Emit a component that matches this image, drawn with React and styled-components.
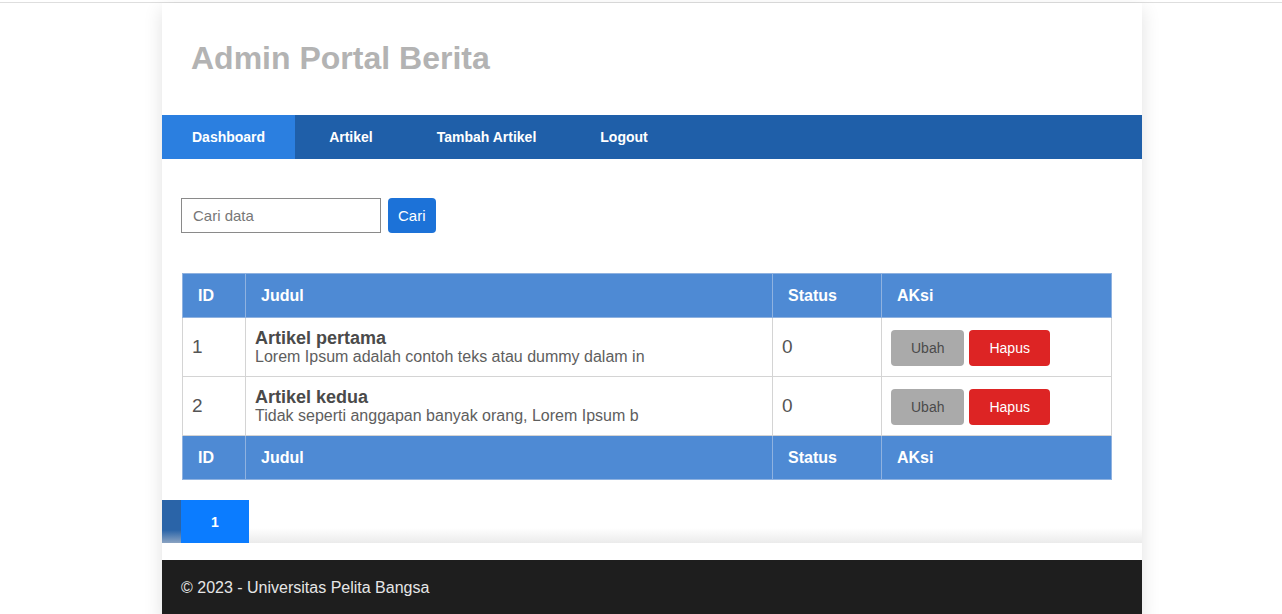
import React from "react";
import styled, { createGlobalStyle } from "styled-components";

const COLORS = {
  navDark: "#1f5fa9",
  navActive: "#2b7fe0",
  tableHead: "#4e8ad4",
  tableHeadLine: "#8fb2e0",
  cellLine: "#d4d4d4",
  primary: "#1c72d8",
  danger: "#dd2424",
  muted: "#aaaaaa",
  text: "#4a4a4a",
  footer: "#1e1e1e",
};

const ARTICLES = [
  {
    id: 1,
    title: "Artikel pertama",
    excerpt: "Lorem Ipsum adalah contoh teks atau dummy dalam in",
    status: 0,
  },
  {
    id: 2,
    title: "Artikel kedua",
    excerpt: "Tidak seperti anggapan banyak orang, Lorem Ipsum b",
    status: 0,
  },
];

const NAV_ITEMS = ["Dashboard", "Artikel", "Tambah Artikel", "Logout"];

const GlobalStyle = createGlobalStyle`
  html, body {
    margin: 0;
    background: #fff;
  }
  body {
    padding-top: 2px;
    font-family: "Liberation Sans", Arial, sans-serif;
  }
  * {
    box-sizing: border-box;
  }
`;

const Page = styled.div`
  border-top: 1px solid #dedede;
  min-height: 611px;
`;

const Container = styled.div`
  width: 980px;
  margin-left: 162px;
  background: #fff;
  box-shadow: 0 6px 18px rgba(0, 0, 0, 0.12);
`;

const Header = styled.header`
  height: 112px;
  padding: 37px 30px 0 29px;
`;

const Title = styled.h1`
  margin: 0;
  font-size: 32px;
  line-height: 37px;
  font-weight: 700;
  color: #b3b3b3;
`;

const Nav = styled.nav`
  display: flex;
  gap: 4px;
  height: 44px;
  background: ${COLORS.navDark};
`;

const NavLink = styled.a`
  display: flex;
  align-items: center;
  padding: 0 30px;
  font-size: 14px;
  font-weight: 700;
  color: #fff;
  text-decoration: none;
  background: ${(p) => (p.$active ? COLORS.navActive : "transparent")};
`;

const Content = styled.main`
  padding: 39px 20px 0 19px;
`;

const SearchForm = styled.form`
  display: flex;
  align-items: center;
  gap: 7px;
  margin-bottom: 40px;
`;

const SearchInput = styled.input`
  width: 200px;
  height: 35px;
  padding: 0 11px;
  border: 1px solid #8a8a8a;
  font-family: inherit;
  font-size: 15px;
  color: #333;
  outline: none;

  &::placeholder {
    color: #777;
  }
`;

const SearchButton = styled.button`
  height: 35px;
  margin-top: -1px;
  padding: 0 10px;
  border: none;
  border-radius: 4px;
  background: ${COLORS.primary};
  color: #fff;
  font-family: inherit;
  font-size: 15px;
`;

const Table = styled.table`
  width: 929px;
  margin-left: 1px;
  border-collapse: collapse;
  table-layout: fixed;
`;

const HeadCell = styled.th`
  height: 44px;
  padding: 0 15px;
  text-align: left;
  font-size: 16px;
  font-weight: 700;
  color: #fff;
  background: ${COLORS.tableHead};
  border: 1px solid ${COLORS.tableHeadLine};
`;

const Cell = styled.td`
  height: 59px;
  padding: 10px 9px;
  vertical-align: middle;
  font-size: 19px;
  color: #555;
  border: 1px solid ${COLORS.cellLine};
`;

const ArticleTitle = styled.div`
  font-size: 18px;
  line-height: 20px;
  font-weight: 700;
  color: ${COLORS.text};
`;

const ArticleExcerpt = styled.div`
  font-size: 16px;
  line-height: 18px;
  color: #5e5e5e;
  white-space: nowrap;
`;

const Actions = styled.div`
  display: flex;
  gap: 5px;
  margin-top: 2px;
`;

const ActionButton = styled.button`
  height: 36px;
  padding: 0 20px;
  border: none;
  border-radius: 4px;
  font-family: inherit;
  font-size: 14px;
  color: ${(p) => (p.$danger ? "#fff" : "#4a4a4a")};
  background: ${(p) => (p.$danger ? COLORS.danger : COLORS.muted)};
`;

const Pagination = styled.div`
  display: flex;
  height: 43px;
  margin-top: 20px;
  background: linear-gradient(to bottom, #fff 65%, #ebebeb);
`;

const PageEdge = styled.span`
  width: 19px;
  background: linear-gradient(to bottom, #2a64a8 70%, #8aa3c2);
`;

const PageLink = styled.a`
  display: flex;
  align-items: center;
  justify-content: center;
  width: 68px;
  font-size: 14px;
  font-weight: 700;
  color: #fff;
  text-decoration: none;
  background: #0b7cff;
`;

const Footer = styled.footer`
  margin-top: 17px;
  padding: 19px 19px 22px;
  background: ${COLORS.footer};
  color: #e6e6e6;
  font-size: 16px;
  line-height: 18px;
`;

const COLUMNS = [
  { label: "ID", width: 63 },
  { label: "Judul", width: 527 },
  { label: "Status", width: 109 },
  { label: "AKsi", width: 230 },
];

const HeadRow = () => (
  <tr>
    {COLUMNS.map((c) => (
      <HeadCell key={c.label}>{c.label}</HeadCell>
    ))}
  </tr>
);

export default function App() {
  return (
    <Page>
      <GlobalStyle />
      <Container>
        <Header>
          <Title>Admin Portal Berita</Title>
        </Header>
        <Nav>
          {NAV_ITEMS.map((item, i) => (
            <NavLink key={item} href="#" $active={i === 0}>
              {item}
            </NavLink>
          ))}
        </Nav>
        <Content>
          <SearchForm onSubmit={(e) => e.preventDefault()}>
            <SearchInput placeholder="Cari data" />
            <SearchButton type="submit">Cari</SearchButton>
          </SearchForm>
          <Table>
            <colgroup>
              {COLUMNS.map((c) => (
                <col key={c.label} style={{ width: c.width }} />
              ))}
            </colgroup>
            <thead>
              <HeadRow />
            </thead>
            <tbody>
              {ARTICLES.map((a) => (
                <tr key={a.id}>
                  <Cell>{a.id}</Cell>
                  <Cell>
                    <ArticleTitle>{a.title}</ArticleTitle>
                    <ArticleExcerpt>{a.excerpt}</ArticleExcerpt>
                  </Cell>
                  <Cell>{a.status}</Cell>
                  <Cell>
                    <Actions>
                      <ActionButton>Ubah</ActionButton>
                      <ActionButton $danger>Hapus</ActionButton>
                    </Actions>
                  </Cell>
                </tr>
              ))}
            </tbody>
            <tfoot>
              <HeadRow />
            </tfoot>
          </Table>
        </Content>
        <Pagination>
          <PageEdge />
          <PageLink href="#">1</PageLink>
        </Pagination>
        <Footer>© 2023 - Universitas Pelita Bangsa</Footer>
      </Container>
    </Page>
  );
}
